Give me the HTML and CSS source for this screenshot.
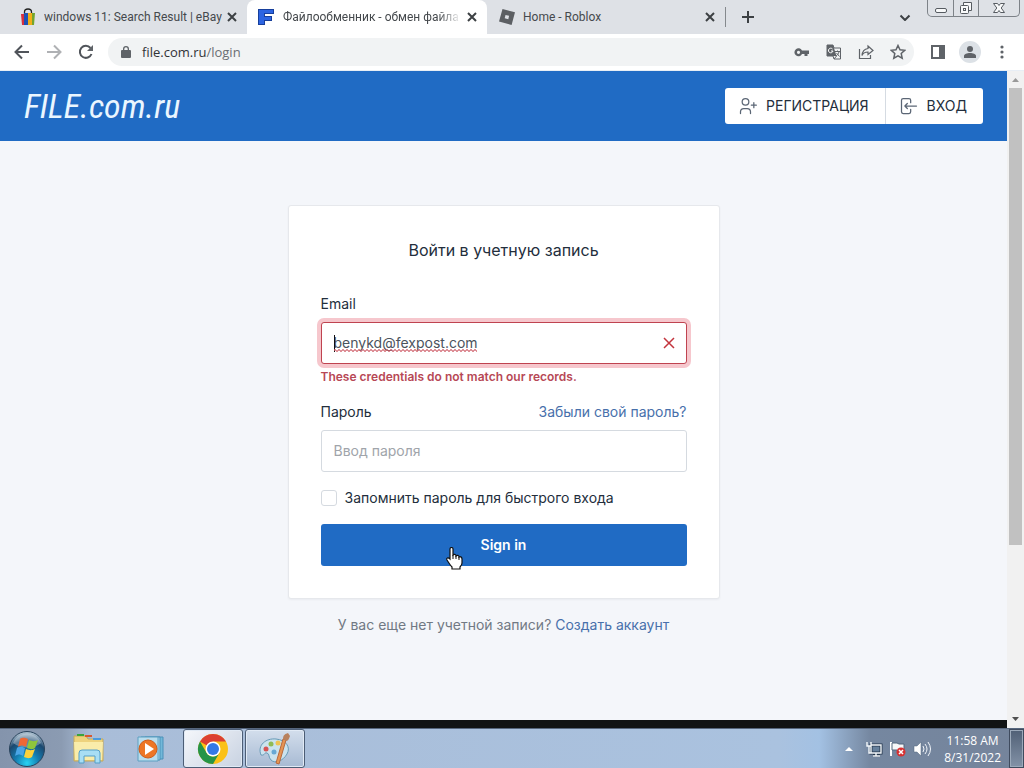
FILE: index.html
```html
<!DOCTYPE html>
<html lang="ru">
	<head>
		<meta charset="utf-8">
		<title>Файлообменник - обмен файлами</title>
		<link rel="stylesheet" href="styles.css">
	</head>
	<body>
		<div class="tabs">
			<div class="tab">
				<svg width="16" height="18" viewBox="0 0 16 18"><path d="M4.500 6V4a3.500 3 0 0 1 7 0v2" fill="none" stroke="#222" stroke-width="1.300"/><path d="M1 6h4v11H2z" fill="#d9303e"/><path d="M4 5h4v12H4z" fill="#1f52b5"/><path d="M8 5h4v12H8z" fill="#f2ae18"/><path d="M12 5h3l-1 12h-2z" fill="#74a52d"/></svg>
				<span class="name">windows 11: Search Result | eBay</span>
				<button class="close" aria-label="Close tab"><svg width="10" height="10" viewBox="0 0 10 10"><path d="M1 1l8 8M9 1l-8 8"/></svg></button>
			</div>
			<div class="tab active">
				<svg width="18" height="18" viewBox="0 0 18 18"><path d="M1 1h16v5H8v2h7v5H8v4H1z" fill="#173f9c"/><path d="M2 2h14v3H7v4h7v3H7v4H2z" fill="#2d65e2"/></svg>
				<span class="name fade">Файлообменник - обмен файла</span>
				<button class="close" aria-label="Close tab"><svg width="10" height="10" viewBox="0 0 10 10"><path d="M1 1l8 8M9 1l-8 8"/></svg></button>
			</div>
			<div class="tab last">
				<svg width="16" height="16" viewBox="0 0 16 16"><path fill-rule="evenodd" d="M3.500 0L16 3.200 12.600 16 0 12.600zM6.500 6l-.8 3.300 3.600.9.800-3.400z" fill="#5c5f63"/></svg>
				<span class="name">Home - Roblox</span>
				<button class="close" aria-label="Close tab"><svg width="10" height="10" viewBox="0 0 10 10"><path d="M1 1l8 8M9 1l-8 8"/></svg></button>
			</div>
			<button class="newtab" aria-label="New tab"><svg width="12" height="12" viewBox="0 0 12 12"><path d="M6 0v12M0 6h12"/></svg></button>
			<button class="search" aria-label="Search tabs"><svg width="12" height="8" viewBox="0 0 12 8"><path d="M1.500 1.500L6 6l4.500-4.500"/></svg></button>
			<div class="window">
				<button aria-label="Minimize"><svg width="14" height="14" viewBox="0 0 14 14"><rect x="1.500" y="7.500" width="11" height="4" rx="1.500"/></svg></button>
				<button aria-label="Restore"><svg width="14" height="14" viewBox="0 0 14 14"><path d="M4.500 4V1.500h8v8H10"/><rect x="1.500" y="4.500" width="8" height="8" rx="1"/><rect x="4.500" y="7.500" width="2" height="2"/></svg></button>
				<button class="wide" aria-label="Close"><svg width="14" height="14" viewBox="0 0 14 14"><path d="M1.500 2.500h4L7 4.500l1.500-2h4L9.200 7l3.300 4.500h-4L7 9.500l-1.500 2h-4L4.800 7z"/></svg></button>
			</div>
		</div>

		<div class="toolbar">
			<button aria-label="Back"><svg width="16" height="16" viewBox="0 0 16 16"><path class="line" d="M15 8H2M8 1.500L1.500 8 8 14.500"/></svg></button>
			<button class="off" aria-label="Forward"><svg width="16" height="16" viewBox="0 0 16 16"><path class="line" d="M1 8h13M8 1.500L14.500 8 8 14.500"/></svg></button>
			<button aria-label="Reload"><svg width="16" height="16" viewBox="0 0 16 16"><path class="line" d="M13.500 10A6 6 0 1 1 12.500 4"/><path d="M15 1v6H9z"/></svg></button>
			<div class="address">
				<svg width="10" height="14" viewBox="0 0 10 14"><path fill-rule="evenodd" d="M1 5h1V4a3 3 0 0 1 6 0v1h1a1 1 0 0 1 1 1v6a1 1 0 0 1-1 1H1a1 1 0 0 1-1-1V6a1 1 0 0 1 1-1zM3.300 5h3.400V4a1.700 1.700 0 0 0-3.400 0z"/></svg>
				<span class="url"><b>file.com.ru</b>/login</span>
				<button aria-label="Passwords"><svg width="16" height="16" viewBox="0 0 16 16"><path fill-rule="evenodd" d="M8 6.500h7V10h-1.500v2h-3v-2H8A4 4 0 1 1 8 6.500zM4.500 6.700a1.600 1.600 0 1 0 0 3.200 1.600 1.600 0 0 0 0-3.200z"/></svg></button>
				<button aria-label="Translate"><svg width="16" height="16" viewBox="0 0 16 16"><path d="M1 1h6l1 3h6.500v11H8l-1-3H1z" fill="none" stroke="#5f6368"/><path d="M1 1h6l3.500 11H1z"/><path d="M6.500 5A2.300 2.300 0 1 0 7 7H5" fill="none" stroke="#fff"/><path d="M9 7.500h5M11.500 6.500v1M13 8c-.5 2-2 3.500-3 4M10.500 9l3 3.500M8 15l2.500-3" fill="none" stroke="#5f6368"/></svg></button>
				<button aria-label="Share"><svg width="16" height="16" viewBox="0 0 16 16"><path d="M1.500 5v9.500h11V11M10 2l5 4.500-5 4V8C7 8 5 9 4 11.500 4.300 7.500 6.500 5 10 4.500z" fill="none" stroke="#5f6368" stroke-width="1.200"/></svg></button>
				<button aria-label="Bookmark"><svg width="16" height="16" viewBox="0 0 16 16"><path d="M8 1.500l2 4.300 4.700.5-3.500 3.200 1 4.700L8 11.800l-4.200 2.400 1-4.700L1.300 6.300 6 5.800z" fill="none" stroke="#5f6368" stroke-width="1.500"/></svg></button>
			</div>
			<button aria-label="Side panel"><svg width="16" height="16" viewBox="0 0 16 16"><path fill-rule="evenodd" d="M1 1h14v14H1zM3 3v10h6V3z"/></svg></button>
			<button class="profile" aria-label="Profile"><svg width="14" height="14" viewBox="0 0 14 14"><circle cx="7" cy="4" r="3"/><path d="M1 13v-2c0-4 12-4 12 0v2z"/></svg></button>
			<button aria-label="Menu"><svg width="16" height="16" viewBox="0 0 16 16"><circle cx="8" cy="3" r="1.600"/><circle cx="8" cy="8" r="1.600"/><circle cx="8" cy="13" r="1.600"/></svg></button>
		</div>

		<div class="view">
			<div class="page">
				<header>
					<a class="logo" href="#">FILE.com.ru</a>
					<div class="links">
						<a href="#"><svg width="20" height="20" viewBox="0 0 24 24"><circle cx="9" cy="7" r="4"/><path d="M3 21v-2a4 4 0 0 1 4-4h4a4 4 0 0 1 4 4v2M16 11h6M19 8v6"/></svg>РЕГИСТРАЦИЯ</a>
						<a href="#"><svg width="20" height="20" viewBox="0 0 24 24"><path d="M14 8V5a2 2 0 0 0-2-2H5a2 2 0 0 0-2 2v14a2 2 0 0 0 2 2h7a2 2 0 0 0 2-2v-3M21 12H7l3-3M10 15l-3-3"/></svg>ВХОД</a>
					</div>
				</header>
				<main>
					<form class="card">
						<h1>Войти в учетную запись</h1>
						<label for="email">Email</label>
						<div class="field">
							<input class="text invalid" id="email" type="text" name="email" value="benykd@fexpost.com" spellcheck="false">
							<span class="caret"></span>
							<span class="squiggle"></span>
							<svg class="cross" width="12" height="12" viewBox="0 0 12 12"><path d="M1 1l10 10M11 1L1 11"/></svg>
						</div>
						<div class="error">These credentials do not match our records.</div>
						<div class="row">
							<label for="password">Пароль</label>
							<a href="#">Забыли свой пароль?</a>
						</div>
						<input class="text" id="password" type="password" name="password" placeholder="Ввод пароля">
						<div class="check">
							<input id="remember" type="checkbox" name="remember">
							<label for="remember">Запомнить пароль для быстрого входа</label>
						</div>
						<button class="submit" type="button">Sign in
							<svg class="hand" width="20" height="24" viewBox="0 0 20 24"><path d="M5 2c0-2 3-2 3 0v6c1-1 3-1 3 1 1-1 3-1 3 1 1-1 3 0 3 2v4c0 2-1 3-2 4v2H7v-2c-2-2-3-4-5-7-1-2 1-3 3-1z" fill="#fff" stroke="#111" stroke-width="1.200"/><path d="M8 8v4M11 9v3M14 10v3" stroke="#111"/></svg>
						</button>
					</form>
					<p>У вас еще нет учетной записи? <a href="#">Создать аккаунт</a></p>
				</main>
				<div class="bottom"></div>
			</div>
			<div class="scroll">
				<svg width="17" height="17" viewBox="0 0 17 17"><path d="M5 11l3.500-4 3.500 4z" fill="#999"/></svg>
				<div class="thumb"></div>
				<svg width="17" height="17" viewBox="0 0 17 17"><path d="M5 6h7l-3.500 4z" fill="#505050"/></svg>
			</div>
		</div>

		<div class="taskbar">
			<button class="start" aria-label="Start">
				<svg width="38" height="38" viewBox="0 0 38 38">
					<defs><radialGradient id="orb" cx=".5" cy=".9" r=".85"><stop offset="0" stop-color="#27d3f2"/><stop offset=".4" stop-color="#147cb0"/><stop offset=".75" stop-color="#1b486f"/><stop offset="1" stop-color="#a5bacb"/></radialGradient></defs>
					<circle cx="19" cy="19" r="17.500" fill="url(#orb)" stroke="#29435c"/>
					<path d="M5 13a15 15 0 0 1 28 0c-7 6-20 6-28 0z" fill="#fff" opacity=".3"/>
					<path d="M12 9c3-2 5-1 8 0l-2 8c-3-2-5-2-8 0z" fill="#ee6735"/><path d="M21 10c3 1 5 2 9 0l-3 8c-3 2-5 1-8 0z" fill="#8fc63c"/>
					<path d="M9 18c3-2 5-1 8 0l-2 8c-3-2-5-2-8 0z" fill="#4aa5e6"/><path d="M18 19c3 1 5 2 9 0l-3 8c-3 2-5 1-8 0z" fill="#fcd23b"/>
				</svg>
			</button>
			<button class="task" aria-label="Explorer">
				<svg width="36" height="32" viewBox="0 0 36 32"><path d="M3 3h12l2 3h15v22H3z" fill="#edd27c" stroke="#c3a95a"/><path d="M6 2h7" stroke="#3ba33c" stroke-width="2"/><path d="M14 3h7" stroke="#d9582e" stroke-width="2"/><path d="M22 6h8" stroke="#4b9bdd" stroke-width="2"/><path d="M3 9h29l-1 18H4z" fill="#f9ecaa"/><path d="M8 30V20q0-3 3-3h15q3 0 3 3v10h-5v-7H13v7z" fill="#a8def4" stroke="#559fc8"/></svg>
			</button>
			<button class="task" aria-label="Media Player">
				<svg width="32" height="30" viewBox="0 0 32 30"><path d="M10 3h18v22H10z" fill="#72b8d9" stroke="#4b91b9"/><path d="M6 3h19v23H6z" fill="#a7d5ea" stroke="#4b91b9"/><path d="M3 3h20v24H3z" fill="#b9dded" stroke="#5da0c2"/><circle cx="13" cy="15" r="9" fill="#ed7625" stroke="#ce5c19"/><path d="M10 9l9 6-9 6z" fill="#fff"/></svg>
			</button>
			<button class="task open current" aria-label="Chrome">
				<svg width="32" height="32" viewBox="0 0 32 32"><circle cx="16" cy="16" r="15" fill="#fbc116"/><path d="M16 16L3 8.500A15 15 0 0 1 29 8.500H16z" fill="#dc4032"/><path d="M16 31A15 15 0 0 1 3 8.500l6.500 11.250A7.500 7.500 0 0 0 22.500 19.750z" fill="#269447"/><circle cx="16" cy="16" r="7.500" fill="#fff"/><circle cx="16" cy="16" r="6" fill="#3479e5"/></svg>
			</button>
			<button class="task open" aria-label="Paint">
				<svg width="34" height="34" viewBox="0 0 34 34"><path d="M3 23C-1 13 8 6 18 7s15 8 11 15-12 10-16 6c-3-3-1-6-4-7s-2 3-6 2z" fill="#cbe3ee" stroke="#679bb7"/><circle cx="8" cy="17" r="2.500" fill="#d65353"/><circle cx="13" cy="12" r="2.500" fill="#8fbb54"/><circle cx="20" cy="11" r="2.500" fill="#efc452"/><circle cx="16" cy="20" r="2.500" fill="#67a8d4"/><path d="M28 8l-7 24-3-1 7-24z" fill="#e69554" stroke="#b7693d"/><path d="M25 7c0-4 2-5 5-6l2 3c-1 3-2 5-4 5z" fill="#b8815e"/></svg>
			</button>
			<div class="tray">
				<svg width="10" height="6" viewBox="0 0 10 6"><path d="M1 5l4-4 4 4z" fill="#fff"/></svg>
				<svg width="18" height="16" viewBox="0 0 18 16"><path d="M6 4h10v8H6zM8 15h7M11 12v3" fill="#66809c" stroke="#25374d" stroke-width="3"/><path d="M6 4h10v8H6zM8 15h7M11 12v3M2 1v4h4V1M4 5v7h3" fill="none" stroke="#f4f8fb" stroke-width="1.400"/></svg>
				<svg width="18" height="16" viewBox="0 0 18 16"><path d="M2 1v14" stroke="#fff" stroke-width="2"/><path d="M3 2h5l2 1h5v7H9L8 9H3z" fill="#f7f8f9" stroke="#53677d"/><circle cx="12" cy="11" r="4.500" fill="#d73132"/><path d="M10 9l4 4M14 9l-4 4" stroke="#fff" stroke-width="1.500"/></svg>
				<svg width="18" height="16" viewBox="0 0 18 16"><path d="M1 5h3l4-4v14l-4-4H1z" fill="#fff" stroke="#53677d" stroke-width=".5"/><path d="M10 5q2 3 0 6M12 3q4 5 0 10M15 1q5 7 0 14" fill="none" stroke="#f1f5fa"/></svg>
				<div class="clock">11:58 AM<br>8/31/2022</div>
				<button class="desktop" aria-label="Show desktop"></button>
			</div>
		</div>
	</body>
</html>
```
FILE: styles.css
```css
* { box-sizing:border-box; }
body { margin:0; min-height:100vh; display:flex; flex-direction:column; font:14px/20px Inter, sans-serif; color:#232e3c; background:#f4f6fa; }
button { border:0; padding:0; background:none; font-family:inherit; }
svg { flex:none; }
a { color:#4870ab; text-decoration:none; }

/* browser */
.tabs { height:34px; display:flex; align-items:center; background:#dee1e6; font:12px/16px Roboto, sans-serif; color:#45494d; }
.tab { width:247px; height:34px; padding:0 10px 0 20px; display:flex; align-items:center; gap:8px; }
.active { width:240px; padding-left:10px; background:#fff; border-radius:8px 8px 0 0; }
.last { width:238px; padding-left:12px; }
.name { flex:1; margin-right:-6px; overflow:hidden; white-space:nowrap; }
.fade { -webkit-mask-image:linear-gradient(to right, #000 85%, transparent 98%); mask-image:linear-gradient(to right, #000 85%, transparent 98%); }
.close { width:10px; height:10px; display:flex; }
.tabs svg path { stroke-linejoin:round; }
.close path, .newtab path, .search path { fill:none; stroke:#3c4043; stroke-width:2; }
.newtab { height:20px; padding-left:16px; border-left:1px solid #85898d; display:flex; align-items:center; }
.search { margin-left:auto; margin-right:16px; }
.window { align-self:flex-start; height:17px; margin-right:4px; display:flex; border:1px solid #7d8288; border-top:0; border-radius:0 0 5px 5px; }
.window button { width:25px; display:flex; align-items:center; justify-content:center; }
.window button + button { border-left:1px solid #7d8288; }
.window .wide { width:41px; }
.window svg { fill:#f8f9fa; stroke:#565b61; }
.toolbar { height:37px; padding:0 14px; display:flex; align-items:center; gap:16px; background:#fff; border-bottom:1px solid #e8eef5; fill:#5f6368; }
.toolbar button { width:16px; height:16px; flex:none; }
.toolbar button svg { display:block; }
.toolbar .line { fill:none; stroke:#50545a; stroke-width:2; }
.toolbar .off { opacity:.45; }
.address { flex:1; height:28px; margin-left:-2px; padding:0 8px 0 13px; display:flex; align-items:center; gap:16px; background:#f1f3f4; border-radius:14px; }
.url { flex:1; margin-left:-5px; font:13px/20px "Open Sans", sans-serif; color:#6a6e73; }
.url b { font-weight:400; color:#303236; }
.toolbar .profile { width:22px; height:22px; margin:0 -3px; padding:4px; background:#dce1e6; border-radius:50%; }
.view { flex:1; display:flex; }

/* site */
.page { flex:1; display:flex; flex-direction:column; }
header { height:70px; padding:0 24px; display:flex; align-items:center; justify-content:space-between; background:#206bc4; }
.logo { font:italic 34px/60px "Roboto Condensed", Lato, sans-serif; color:#eaf6ff; }
.links { display:flex; background:#fff; border-radius:3px; }
.links a { height:36px; padding:0 16px 0 13px; display:flex; align-items:center; gap:8px; color:#232e3c; }
.links a + a { border-left:1px solid #d5dbe2; }
.links svg { fill:none; stroke:#5b6675; stroke-width:1.5; stroke-linecap:round; stroke-linejoin:round; }
main { flex:1; padding:64px 16px; display:flex; flex-direction:column; align-items:center; }
.card { width:100%; max-width:432px; padding:32px; background:#fff; border:1px solid #e6e8ec; border-radius:3px; box-shadow:0 1px 2px #232e3c0d; }
h1 { margin:0 0 32px; font-size:16px; line-height:24px; font-weight:400; text-align:center; }
.card label { display:block; }
.field { position:relative; margin:8px 0 4px; }
.text { display:block; width:100%; height:42px; padding:0 12px 1px; border:1px solid #d5dae0; border-radius:3px; font:14px/20px Inter, sans-serif; color:#4b535d; background:#fff; }
.text::placeholder { color:#a0a4aa; opacity:1; }
.invalid { border-color:#bf4350; box-shadow:0 0 0 4px #f6c7cd; }
.caret { position:absolute; left:13px; top:13px; width:1px; height:17px; background:#111; }
/* spelling mark under the address */
.squiggle { position:absolute; left:13px; top:27px; width:143px; height:3px; background:linear-gradient(45deg, transparent 40%, #d0606c 40%, #d0606c 60%, transparent 60%) 0 0/4px 3px, linear-gradient(-45deg, transparent 40%, #d0606c 40%, #d0606c 60%, transparent 60%) 2px 0/4px 3px; opacity:.7; }
.cross { position:absolute; right:12px; top:15px; stroke:#c3343d; stroke-width:1.5; }
.error { font-size:12px; line-height:18px; font-weight:600; color:#b74856; }
.row { display:flex; justify-content:space-between; margin:16px 0 8px; }
.check { display:flex; align-items:center; gap:8px; margin:16px 0; }
.check input { appearance:none; width:16px; height:16px; margin:0; border:1px solid #d5dae0; border-radius:3px; }
.submit { position:relative; display:block; width:100%; height:42px; padding-bottom:2px; font-size:14px; font-weight:600; color:#fff; background:#206bc4; border-radius:3px; }
.hand { position:absolute; left:124px; top:23px; }
main p { margin:16px 0 0; color:#717984; }
.bottom { height:8px; background:#111314; }
.scroll { width:17px; display:flex; flex-direction:column; background:#f1f1f1; }
.thumb { height:457px; margin:0 2px auto; background:#c1c1c1; }

/* taskbar */
.taskbar { height:40px; display:flex; align-items:center; background:linear-gradient(to right, #8494ac 0, #8b9bb2 6%, #a9bdd8 9%, #aac2df 76%, #a3c1e3 80%, #7587a0 85%, #75849b); border-top:1px solid #56667d; }
.start { width:38px; height:38px; margin:0 13px 0 8px; }
.task { width:60px; height:39px; margin-right:2px; display:flex; align-items:center; justify-content:center; }
.open { border:1px solid #4c5d75; border-radius:3px; background:linear-gradient(#d3deec, #a7bad3); box-shadow:inset 0 0 0 1px #e1eaf5; }
.current { background:linear-gradient(135deg, #f5f7fb, #c8d2e1); }
.tray { align-self:stretch; margin-left:auto; display:flex; align-items:center; gap:6px; }
.tray svg:first-child { margin-right:5px; }
.clock { margin:0 2px 0 7px; font:12px/17px "Open Sans", sans-serif; text-align:center; color:#fff; }
.desktop { width:15px; height:39px; border:1px solid #3f4b5e; background:linear-gradient(#506076, #8392a7); box-shadow:inset 0 0 0 1px #9ba9ba; }
```
